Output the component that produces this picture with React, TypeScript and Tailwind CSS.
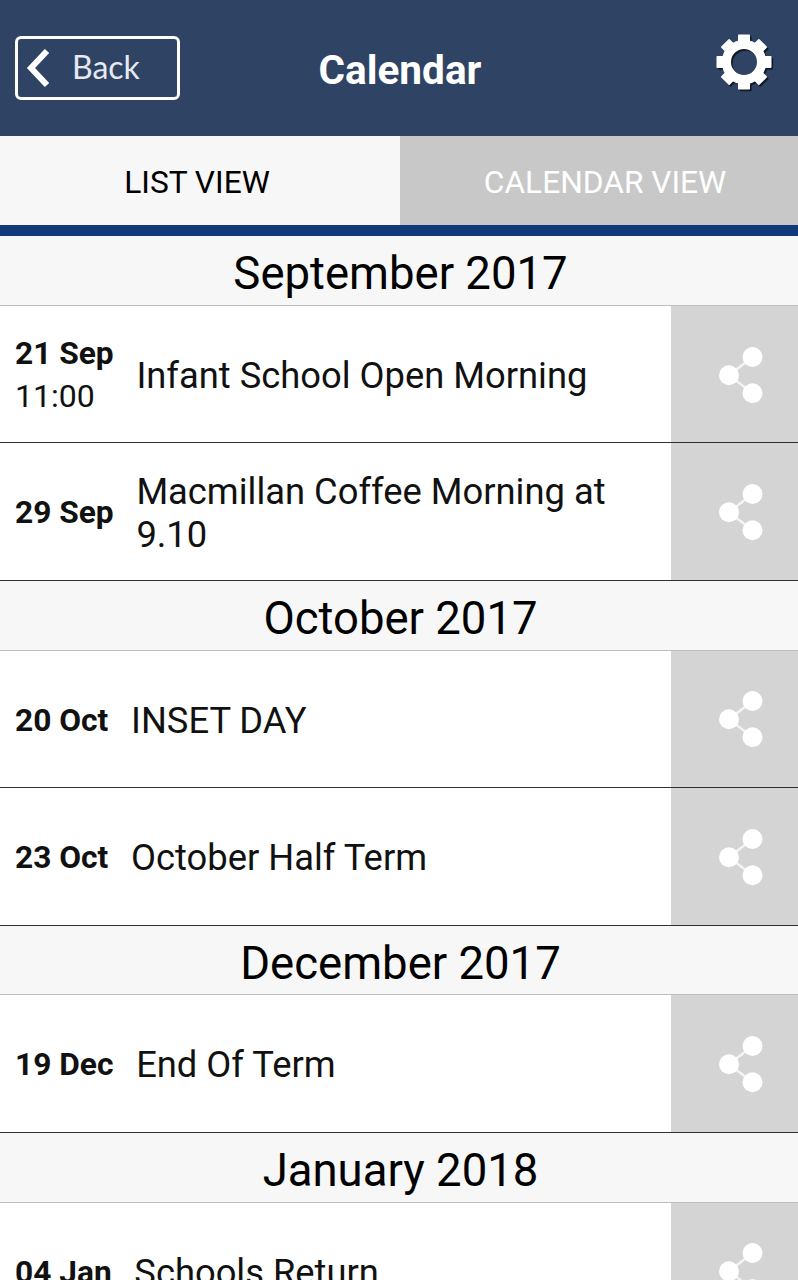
import React from "react";

type CalendarEvent = {
  date: string;
  time?: string;
  title: string;
};

type Month = {
  name: string;
  events: CalendarEvent[];
};

const months: Month[] = [
  {
    name: "September 2017",
    events: [
      { date: "21 Sep", time: "11:00", title: "Infant School Open Morning" },
      { date: "29 Sep", title: "Macmillan Coffee Morning at 9.10" },
    ],
  },
  {
    name: "October 2017",
    events: [
      { date: "20 Oct", title: "INSET DAY" },
      { date: "23 Oct", title: "October Half Term" },
    ],
  },
  {
    name: "December 2017",
    events: [{ date: "19 Dec", title: "End Of Term" }],
  },
  {
    name: "January 2018",
    events: [{ date: "04 Jan", title: "Schools Return" }],
  },
];

const teeth = [0, 45, 90, 135, 180, 225, 270, 315];

function GearShape({ color }: { color: string }) {
  return (
    <g>
      <circle cx="28" cy="28" r="17.6" fill="none" stroke={color} strokeWidth="9.2" />
      {teeth.map((angle) => (
        <rect
          key={angle}
          x="22"
          y={angle % 90 === 0 ? 0.5 : 1}
          width="12"
          height="9"
          rx="0.8"
          fill={color}
          transform={`rotate(${angle} 28 28)`}
        />
      ))}
    </g>
  );
}

function GearIcon() {
  return (
    <svg width="60" height="60" viewBox="0 0 60 60">
      <g transform="translate(1.6 1.8)" opacity="0.8">
        <GearShape color="#0c1117" />
      </g>
      <GearShape color="#ffffff" />
    </svg>
  );
}

function ShareIcon() {
  return (
    <svg width="44" height="58" viewBox="0 0 44 58" fill="#ffffff">
      <path d="M33.5 11 10 29.2 33.5 47.3" fill="none" stroke="#ffffff" strokeOpacity="0.75" strokeWidth="2.4" />
      <circle cx="33.5" cy="11" r="10" />
      <circle cx="10" cy="29.2" r="10" />
      <circle cx="33.5" cy="47.3" r="10" />
    </svg>
  );
}

function EventRow({ event }: { event: CalendarEvent }) {
  return (
    <li className="flex h-[137.5px] border-b border-[#303030] bg-white text-[#111111]">
      <div className="flex flex-1 items-center pt-[2.6px] pl-[15px] pr-8">
        <div className="shrink-0 text-[31.7px] leading-[43px]">
          <div className="font-bold">{event.date}</div>
          {event.time && <div className="text-[32px]">{event.time}</div>}
        </div>
        <div className="ml-[22.7px] text-[36.35px] leading-[43px]">{event.title}</div>
      </div>
      <button className="flex w-[127px] shrink-0 items-center justify-center bg-[#d4d4d4] pt-px pl-3">
        <ShareIcon />
      </button>
    </li>
  );
}

export default function App() {
  return (
    <main className="h-[1280px] w-[798px] overflow-hidden bg-white font-['Roboto',sans-serif]">
      <header className="grid h-[136px] grid-cols-3 items-center bg-[#2f4364] px-[15px] text-white">
        <button className="flex h-16 w-[165px] items-center rounded-md border-[3px] border-white pl-2 font-['Lato',sans-serif] text-[32px]">
          <svg width="24" height="38" viewBox="0 0 24 38" fill="none" stroke="#ffffff" strokeWidth="6">
            <path d="M21 2 5 19 21 36" />
          </svg>
          <span className="ml-[22px] pb-[3px] text-[#e6eaf0]">Back</span>
        </button>
        <h1 className="pt-[5px] pl-0.5 text-center text-[40.5px] font-bold">Calendar</h1>
        <button className="mr-[7px] justify-self-end pb-2">
          <GearIcon />
        </button>
      </header>

      <nav className="flex h-[100px] border-b-[11px] border-[#113a7d] text-[31.7px]">
        <button className="w-[400px] bg-[#f7f7f7] pt-1 pr-1.5 text-black">LIST VIEW</button>
        <button className="flex-1 bg-[#c8c8c8] pt-1 pl-3 text-white">CALENDAR VIEW</button>
      </nav>

      {months.map((month) => (
        <section key={month.name}>
          <h2 className="flex h-[69.8px] items-center justify-center border-b border-[#bdbdbd] bg-[#f7f7f7] pt-[7.5px] pl-[3px] text-[45.5px] text-black">
            {month.name}
          </h2>
          <ul>
            {month.events.map((event) => (
              <EventRow key={event.date} event={event} />
            ))}
          </ul>
        </section>
      ))}
    </main>
  );
}
